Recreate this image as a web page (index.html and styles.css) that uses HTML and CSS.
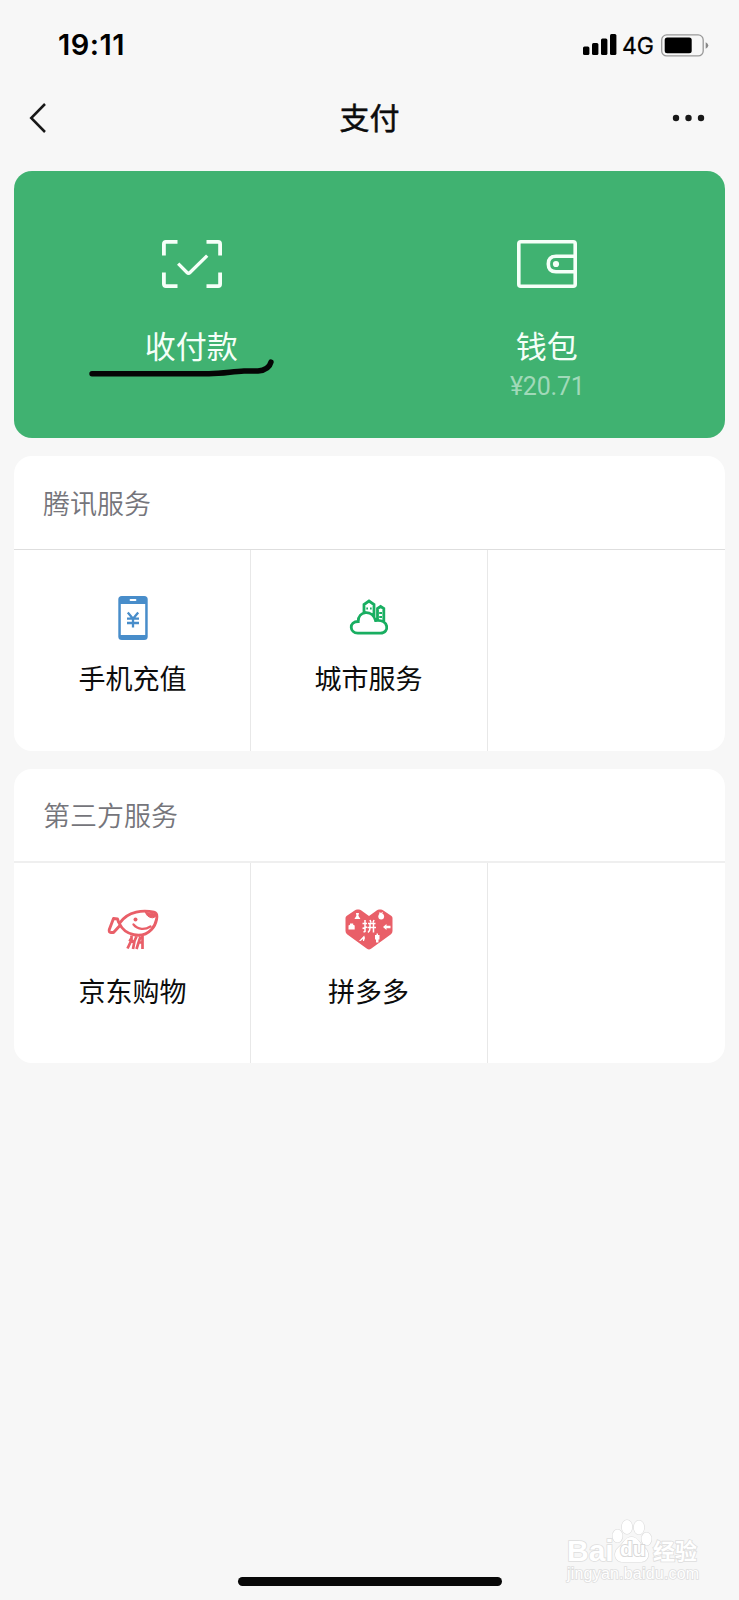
FILE: index.html
```html
<!DOCTYPE html>
<html lang="zh-CN">
<head>
<meta charset="utf-8">
<title>支付</title>
<link rel="stylesheet" href="styles.css">
</head>
<body>
<div class="screen">
  <header class="status">
    <span class="time">19:11</span>
    <div class="status-right">
      <svg class="signal" width="34" height="21" viewBox="0 0 34 21"><rect x="0" y="12.5" width="6.4" height="8.5" rx="1.5"/><rect x="9" y="9" width="6.4" height="12" rx="1.5"/><rect x="18" y="4.5" width="6.4" height="16.500" rx="1.500"/><rect x="27" y="0" width="6.400" height="21" rx="1.500"/></svg>
      <span class="network">4G</span>
      <svg class="battery" width="48" height="23" viewBox="0 0 48 23"><rect x=".7" y=".9" width="41.500" height="21" rx="5" fill="none" stroke="#999" stroke-width="1.300"/><rect x="3.700" y="3.600" width="27" height="15.700" rx="2.500"/><path d="M44.700 8.200q2.600 1.200 2.600 3.300t-2.600 3.300z" fill="#888"/></svg>
    </div>
  </header>
  <nav class="navbar">
    <svg class="back" width="18" height="32" viewBox="0 0 18 32"><path d="M16 2 2.200 16 16 30" fill="none" stroke="#181818" stroke-width="2.500"/></svg>
    <h1 class="title">支付</h1>
    <svg class="more" width="33" height="8" viewBox="0 0 33 8" fill="#181818"><circle cx="4" cy="4" r="3.200"/><circle cx="16.500" cy="4" r="3.200"/><circle cx="29" cy="4" r="3.200"/></svg>
  </nav>
  <main class="content">
    <section class="pay">
      <div class="pay-item">
        <svg width="60" height="48" viewBox="0 0 60 48" fill="none" stroke="#f5fff8" stroke-width="3.800"><path d="M15.500 1.900H3.900Q1.900 1.900 1.900 3.900V15.500M44.500 1.900H56.100Q58.100 1.900 58.100 3.900V15.500M15.500 46.100H3.900Q1.900 46.100 1.900 44.100V32.500M44.500 46.100H56.100Q58.100 46.100 58.100 44.100V32.500"/><path d="M16.200 23.700 25 32.500Q26.500 34 28 32.500L45.200 15.600" stroke-width="3.300"/></svg>
        <span class="pay-label">收付款</span>
        <svg class="scribble" width="186" height="20" viewBox="0 0 186 20"><path d="M4 15.700H121C135 15.700 144 13.500 156 13H170Q181 12 183 4" fill="none" stroke="#050505" stroke-width="5.400" stroke-linecap="round" stroke-linejoin="round"/></svg>
      </div>
      <div class="pay-item">
        <svg width="60" height="48" viewBox="0 0 60 48" fill="none" stroke="#f5fff8" stroke-width="3.600"><rect x="1.800" y="1.800" width="56.400" height="44.400" rx="2"/><path d="M58 16.300H39Q31.300 16.300 31.300 24T39 31.700H58"/><circle cx="39" cy="24" r="3.100" fill="#f5fff8" stroke="none"/></svg>
        <span class="pay-label">钱包</span>
        <span class="amount">¥20.71</span>
      </div>
    </section>
    <section class="panel">
      <h2 class="panel-title">腾讯服务</h2>
      <div class="grid">
        <div class="cell">
          <svg class="icon" width="52" height="46" viewBox="0 0 52 46"><rect x="11.300" y="1" width="29.400" height="44" rx="3.500" fill="#488dca"/><rect x="13.800" y="9" width="24.400" height="31" fill="#fff"/><path d="M23.500 5h5" stroke="#fff" stroke-width="1.800" stroke-linecap="round"/><path d="M20.800 17.500 26 23.700 31.200 17.500M20 23.700h12M20 28h12M26 23.700v8.800" fill="none" stroke="#488dca" stroke-width="2.300"/></svg>
          <span>手机充值</span>
        </div>
        <div class="cell">
          <svg class="icon" width="52" height="46" viewBox="0 0 52 46" fill="none" stroke="#19ae61" stroke-width="2.800"><path d="M21 18.500V9.500L26 6 31 9.500V22M34.500 26V13.500L37.600 11.500 40.800 13.500V27M14.800 38.200C6.500 38.200 5.500 26.500 15.200 26.500 15 15.500 29.500 14 32.500 25.500 46 23.500 47 38.200 37.500 38.200Z"/><path d="M23.300 13.500h1.700M27 13.500h1.700M36.200 18h2.800M36.200 22h2.800" stroke-width="1.800"/></svg>
          <span>城市服务</span>
        </div>
        <div class="cell"></div>
      </div>
    </section>
    <section class="panel">
      <h2 class="panel-title">第三方服务</h2>
      <div class="grid">
        <div class="cell">
          <svg class="icon" width="52" height="46" viewBox="0 0 52 46" fill="none" stroke="#e95f68" stroke-width="2.900" stroke-linecap="round" stroke-linejoin="round"><path d="M12.300 15.500C21 2.500 37 2 47 4.200 52.500 5.500 49 17 44.500 21.500 35 31.500 18 27.500 12.300 15.500Z"/><path d="M11.500 14 10.500 11 6.500 10.500 2.300 21.500Q1.500 25 4.500 24.500H6.500L12.500 18"/><path d="M38.500 4.500 48.500 6Q50 9 45.500 9.800 40 9.500 38.500 4.500Z" fill="#e95f68" stroke-width="1"/><circle cx="28.500" cy="11.500" r="2" fill="#e95f68" stroke="none"/><path d="M26.500 16.500C31 22 38 22 43.500 18.500" stroke-width="2.300"/><path d="M24.500 27.500 24.500 32 20.500 40.500M29.500 28.500 27.500 33 26 41M22 31.500 27.500 34.500M33.500 28.500 29.500 41M35.500 28V41M31.500 34.500h4" stroke-width="2.700" stroke-linecap="butt"/></svg>
          <span>京东购物</span>
        </div>
        <div class="cell">
          <svg class="icon" width="52" height="46" viewBox="0 0 52 46" fill="#fff"><path d="M14 1.500H16Q17 1.500 18 2.300L26 8 34 2.300Q35 1.500 36 1.500H38Q39 1.500 40 2.300L48.500 8Q49.500 8.800 49.500 10V23Q49.500 25 48 26.300L28 40.800Q26 42.300 24 40.800L4 26.300Q2.500 25 2.500 23V10Q2.500 8.800 3.500 8L12 2.300Q13 1.500 14 1.500Z" fill="#e95f68"/><path d="M22 12v11.500l-1.500.5M19.500 15.500h4.500M19.500 20.500l4.500-1.500M25 15.500h7.500M24.500 19.500h8.500M27 15v5q0 3-2 4.500M30.500 15v9.500M27 12l1 2.500M31 12l-1 2.500" fill="none" stroke="#fff" stroke-width="1.500"/><path d="M13 5h3l-.6 2.700 2 3.300h-6l2-3.300zM5.500 17.500l1.500-.8V15.500h3.200v1.200l1.500.8v4H5.500zM16 33l5.200-5.500.8 2.500-1 3h-1v-2l-2.500 2zM33.500 27h-1.500v4.500h1v3h2.500v-3h1v-4.500h-1.500v-1.500h-1.500zM40 19l3.500-3v1.700h4v2.600h-4v1.700zM36.500 6l-.7-1.500 2.700.3 1.500-1-.8 2.200z"/><circle cx="38.200" cy="8.500" r="2.900"/></svg>
          <span>拼多多</span>
        </div>
        <div class="cell"></div>
      </div>
    </section>
  </main>
  <div class="home-indicator"></div>
  <div class="watermark">
    <div class="brand">
      <span class="brand-latin">Bai</span>
      <span class="paw"><svg width="42" height="44" viewBox="0 0 42 44" fill="#fff" stroke="#dcdcdc" stroke-width="1.200"><ellipse cx="6.500" cy="17" rx="5" ry="6.500"/><ellipse cx="16" cy="8" rx="5.200" ry="7"/><ellipse cx="28" cy="8.500" rx="5.200" ry="7"/><ellipse cx="35.500" cy="20" rx="5" ry="6.500"/><path d="M20.500 18C14 18 13 24 8 28 1 34 4 43 12 43H29C38 43 40 34 33 28 28 24 27 18 20.500 18Z"/></svg><span class="du">du</span></span>
      <span class="brand-cn">经验</span>
    </div>
    <div class="url">jingyan.baidu.com</div>
  </div>
</div>
</body>
</html>
```
FILE: styles.css
```css
* { box-sizing: border-box; }
body {
  margin: 0;
  background: #f7f7f7;
  color: #0c0c0c;
  font-family: "Liberation Sans", "Noto Sans CJK SC", sans-serif;
}
svg { display: block; flex: none; }
.screen {
  position: relative;
  display: flex;
  flex-direction: column;
  width: 739px;
  height: 1600px;
  overflow: hidden;
}
.status {
  display: flex;
  align-items: center;
  justify-content: space-between;
  height: 90px;
  padding: 0 30px 0 58px;
  font-family: Inter, sans-serif;
  color: #000;
}
.time { font-size: 29px; font-weight: 600; line-height: 40px; letter-spacing: .5px; }
.status-right { display: flex; align-items: center; }
.signal { position: relative; top: -1px; }
.network {
  margin: 2px 7px 0 5px;
  font-size: 23px;
  line-height: 30px;
  -webkit-text-stroke: .3px #000;
}
.navbar {
  display: grid;
  grid-template-columns: 80px 1fr 80px;
  align-items: center;
  height: 56px;
}
.back { margin-left: 29px; }
.title {
  margin: 1px 0 0;
  font-size: 30px;
  font-weight: 400;
  line-height: 44px;
  text-align: center;
  -webkit-text-stroke: .5px #0c0c0c;
}
.more { justify-self: end; margin-right: 34px; }
.content {
  display: flex;
  flex-direction: column;
  gap: 18px;
  padding: 25px 14px 0;
}
.pay {
  display: grid;
  grid-template-columns: 1fr 1fr;
  height: 267px;
  border-radius: 18px;
  background: #40b271;
}
.pay-item {
  position: relative;
  display: flex;
  flex-direction: column;
  align-items: center;
  padding-top: 69px;
  color: #f5fff8;
}
.pay-label {
  margin-top: 38px;
  padding-right: 1px;
  font-size: 31px;
  font-weight: 400;
  line-height: 44px;
}
.scribble { position: absolute; left: 74px; top: 187px; }
.amount {
  margin-top: 2px;
  font-family: Roboto, sans-serif;
  font-size: 25px;
  line-height: 30px;
  letter-spacing: -.2px;
  color: #a0d9b9;
}
.panel {
  height: 295px;
  border-radius: 18px;
  background: #fff;
  overflow: hidden;
}
.panel-title {
  height: 94px;
  margin: 0;
  padding: 3px 29px 0;
  border-bottom: 1px solid #dedede;
  color: #75757b;
  font-size: 27px;
  font-weight: 350;
  line-height: 92px;
}
.panel + .panel { height: 294px; }
.panel + .panel .panel-title { padding-top: 2px; border-bottom: 2px solid #efefef; }
.grid { display: grid; grid-template-columns: repeat(3, 1fr); height: 201px; }
.cell {
  display: flex;
  flex-direction: column;
  align-items: center;
  padding: 45px 0 0 1px;
  border-right: 1px solid #e8e8e8;
  font-size: 27px;
  line-height: 40px;
}
.cell + .cell { padding-left: 0; padding-right: 1px; }
.cell:last-child { border-right: 0; }
.cell span { margin-top: 19px; }
.home-indicator {
  width: 264px;
  height: 9px;
  margin: auto auto 14px;
  border-radius: 5px;
  background: #080808;
}
.watermark {
  position: absolute;
  left: 567px;
  top: 1519px;
  color: #fff;
  -webkit-text-stroke: 1.6px #dedede;
  paint-order: stroke fill;
}
.brand { display: flex; align-items: flex-end; height: 44px; }
.brand-latin { width: 44px; font-size: 30px; font-weight: 700; line-height: 25px; }
.paw { position: relative; width: 42px; }
.du {
  position: absolute;
  left: 9px;
  top: 19px;
  font-size: 21px;
  font-weight: 700;
  line-height: 22px;
  color: #fff;
  -webkit-text-stroke: 2px #d8d8d8;
}
.brand-cn { font-size: 22px; font-weight: 700; line-height: 23px; }
.url { margin-top: 1px; font-size: 16px; line-height: 20px; letter-spacing: .2px; }
```
